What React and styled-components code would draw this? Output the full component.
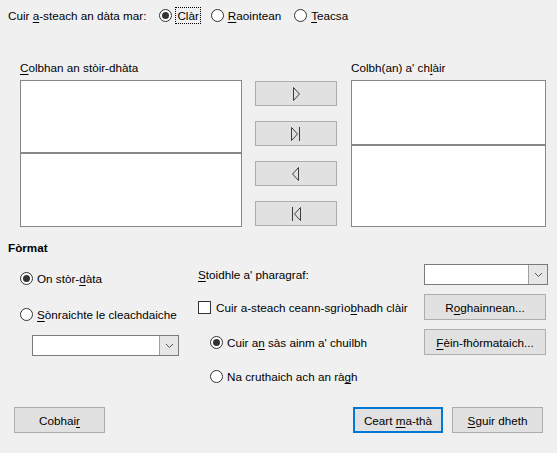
import React from 'react';
import styled, { createGlobalStyle } from 'styled-components';

const GlobalStyle = createGlobalStyle`
  html, body {
    margin: 0;
    padding: 0;
    background: #f0f0f0;
  }
  body {
    font-family: 'Liberation Sans', Arial, sans-serif;
    font-size: 11.7px;
    color: #000;
  }
`;

const Dialog = styled.div`
  width: 557px;
  height: 453px;
  background: #f0f0f0;
  box-sizing: border-box;
  padding: 6px 0 0 0;
  display: flex;
  flex-direction: column;
`;

const TopRow = styled.div`
  display: flex;
  align-items: center;
  height: 18px;
  padding-left: 8px;
`;

const TopLabel = styled.span`
  margin-right: 13px;
`;

const Accel = styled.span`
  text-decoration: underline;
  text-underline-offset: 2px;
`;

const RadioWrap = styled.label`
  display: inline-flex;
  align-items: center;
  gap: 4px;
  height: 20px;
  margin-right: ${props => props.$gap || 0}px;
  white-space: nowrap;
`;

const Circle = styled.span`
  width: 13px;
  height: 13px;
  box-sizing: border-box;
  border: 1px solid #333;
  border-radius: 50%;
  background: #fff;
  display: inline-flex;
  align-items: center;
  justify-content: center;
  flex: none;
  &::after {
    content: '';
    width: 7px;
    height: 7px;
    border-radius: 50%;
    background: #333;
    display: ${props => (props.$on ? 'block' : 'none')};
  }
`;

const FocusText = styled.span`
  outline: 1px dotted #000;
  outline-offset: 0;
  padding: 1px 1px;
`;

const Radio = ({ on, gap, children }) => (
  <RadioWrap $gap={gap}>
    <Circle $on={on} />
    {children}
  </RadioWrap>
);

const Columns = styled.div`
  display: grid;
  grid-template-columns: 222px 82px 196px;
  column-gap: 13px;
  padding-left: 20px;
  margin-top: 37px;
  & > :last-child {
    margin-left: 1px;
  }
`;

const ColumnLabel = styled.div`
  height: 14px;
  line-height: 14px;
  margin-bottom: 5px;
  white-space: nowrap;
`;

const ListBox = styled.div`
  height: 147px;
  box-sizing: border-box;
  border: 1px solid #86868b;
  background: #fff;
  display: grid;
  grid-template-rows: ${props => props.$split}px 1fr;
`;

const ListHead = styled.div`
  border-bottom: 2px solid #86868b;
`;

const Shuttle = styled.div`
  display: flex;
  flex-direction: column;
  gap: 15px;
  padding-top: 20px;
`;

const ShuttleButton = styled.button`
  height: 25px;
  width: 82px;
  box-sizing: border-box;
  border: 1px solid #adadad;
  background: #e1e1e1;
  padding: 0;
  display: flex;
  align-items: center;
  justify-content: center;
`;

// outline triangles, 6px wide and 13px tall, with an optional end bar
const Arrow = ({ dir, bar }) => (
  <svg width="16" height="16" viewBox="0 0 16 16">
    <g fill="none" stroke="#3c3c3c" strokeWidth="1">
      {dir === 'right' && !bar && <path d="M5.5 1.5 L11.5 8 L5.5 14.5 Z" />}
      {dir === 'right' && bar && (
        <>
          <path d="M3.5 1.5 L9.5 8 L3.5 14.5 Z" />
          <path d="M11.5 1 V15" />
        </>
      )}
      {dir === 'left' && !bar && <path d="M10.5 1.5 L4.5 8 L10.5 14.5 Z" />}
      {dir === 'left' && bar && (
        <>
          <path d="M4.5 1 V15" />
          <path d="M12.5 1.5 L6.5 8 L12.5 14.5 Z" />
        </>
      )}
    </g>
  </svg>
);

const SectionTitle = styled.div`
  font-weight: bold;
  padding-left: 8px;
  margin-top: 14px;
  height: 14px;
  line-height: 14px;
`;

const FormatArea = styled.div`
  display: grid;
  grid-template-columns: 178px 1fr;
  padding-left: 20px;
  margin-top: 9px;
`;

const LeftCol = styled.div`
  display: flex;
  flex-direction: column;
  align-items: flex-start;
  padding-top: 4px;
`;

const Spacer = styled.div`
  height: ${props => props.$h}px;
`;

const RightCol = styled.div`
  display: grid;
  grid-template-columns: 1fr 124px;
  grid-template-rows: 21px 26px 26px 20px;
  row-gap: 9px;
  align-items: center;
  padding-right: 9px;
  & > :nth-last-child(1) {
    margin-top: 5px;
  }
`;

const Indent = styled.div`
  padding-left: ${props => props.$pad}px;
  display: flex;
  align-items: center;
  white-space: nowrap;
`;

const Combo = styled.div`
  width: ${props => props.$w}px;
  height: 21px;
  box-sizing: border-box;
  border: 1px solid #7a7a7a;
  background: #fff;
  display: flex;
  justify-content: flex-end;
  margin: ${props => props.$m || 0};
`;

const ComboButton = styled.div`
  width: 18px;
  border-left: 1px solid #a0a0a0;
  background: #e6e6e6;
  display: flex;
  align-items: center;
  justify-content: center;
`;

const Chevron = () => (
  <svg width="9" height="6" viewBox="0 0 9 6">
    <path d="M1 1 L4.5 4.5 L8 1" fill="none" stroke="#555" strokeWidth="1" />
  </svg>
);

const CheckWrap = styled.label`
  display: inline-flex;
  align-items: center;
  gap: 5px;
  white-space: nowrap;
`;

const CheckBox = styled.span`
  width: 13px;
  height: 13px;
  box-sizing: border-box;
  border: 1px solid #333;
  background: #fff;
  flex: none;
`;

const Button = styled.button`
  font: inherit;
  color: #000;
  height: 26px;
  width: ${props => props.$w || 122}px;
  box-sizing: border-box;
  border: ${props => (props.$default ? '2px solid #0078d7' : '1px solid #adadad')};
  background: #e1e1e1;
  padding: 0;
  white-space: nowrap;
`;

const Footer = styled.div`
  display: flex;
  align-items: center;
  padding: 0 14px;
  margin-top: 23px;
  gap: 9px;
  & > :first-child {
    margin-right: auto;
  }
`;

export default function App() {
  return (
    <Dialog>
      <GlobalStyle />
      <TopRow>
        <TopLabel>
          Cuir <Accel>a</Accel>-steach an dàta mar:
        </TopLabel>
        <Radio on gap={11}>
          <FocusText>Clàr</FocusText>
        </Radio>
        <Radio gap={13}>
          <span>
            <Accel>R</Accel>aointean
          </span>
        </Radio>
        <Radio>
          <span>
            <Accel>T</Accel>eacsa
          </span>
        </Radio>
      </TopRow>

      <Columns>
        <div>
          <ColumnLabel>
            <Accel>C</Accel>olbhan an stòir-dhàta
          </ColumnLabel>
          <ListBox $split={73}>
            <ListHead />
            <div />
          </ListBox>
        </div>
        <Shuttle>
          <ShuttleButton>
            <Arrow dir="right" />
          </ShuttleButton>
          <ShuttleButton>
            <Arrow dir="right" bar />
          </ShuttleButton>
          <ShuttleButton>
            <Arrow dir="left" />
          </ShuttleButton>
          <ShuttleButton>
            <Arrow dir="left" bar />
          </ShuttleButton>
        </Shuttle>
        <div>
          <ColumnLabel>
            Colbh(an) a' ch<Accel>l</Accel>àir
          </ColumnLabel>
          <ListBox $split={65}>
            <ListHead />
            <div />
          </ListBox>
        </div>
      </Columns>

      <SectionTitle>Fòrmat</SectionTitle>

      <FormatArea>
        <LeftCol>
          <Radio on>
            <span>
              On stòr-<Accel>d</Accel>àta
            </span>
          </Radio>
          <Spacer $h={16} />
          <Radio>
            <span>
              <Accel>S</Accel>ònraichte le cleachdaiche
            </span>
          </Radio>
          <Combo $w={147} $m="11px 0 0 12px">
            <ComboButton>
              <Chevron />
            </ComboButton>
          </Combo>
        </LeftCol>
        <RightCol>
          <Indent $pad={0}>
            <span>
              <Accel>S</Accel>toidhle a' pharagraf:
            </span>
          </Indent>
          <Combo $w={124}>
            <ComboButton>
              <Chevron />
            </ComboButton>
          </Combo>
          <Indent $pad={0}>
            <CheckWrap>
              <CheckBox />
              <span>
                Cuir a-steach ceann-sgrìo<Accel>b</Accel>hadh clàir
              </span>
            </CheckWrap>
          </Indent>
          <Button $w={122}>
            R<Accel>o</Accel>ghainnean...
          </Button>
          <Indent $pad={12}>
            <Radio on>
              <span>
                Cuir a<Accel>n</Accel> sàs ainm a' chuilbh
              </span>
            </Radio>
          </Indent>
          <Button $w={122}>
            <Accel>F</Accel>èin-fhòrmataich...
          </Button>
          <Indent $pad={12}>
            <Radio>
              <span>
                Na cruthaich ach an rà<Accel>g</Accel>h
              </span>
            </Radio>
          </Indent>
        </RightCol>
      </FormatArea>

      <Footer>
        <Button $w={91}>
          Cobhai<Accel>r</Accel>
        </Button>
        <Button $w={90} $default>
          Ceart <Accel>m</Accel>a-thà
        </Button>
        <Button $w={91}>
          <Accel>S</Accel>guir dheth
        </Button>
      </Footer>
    </Dialog>
  );
}
